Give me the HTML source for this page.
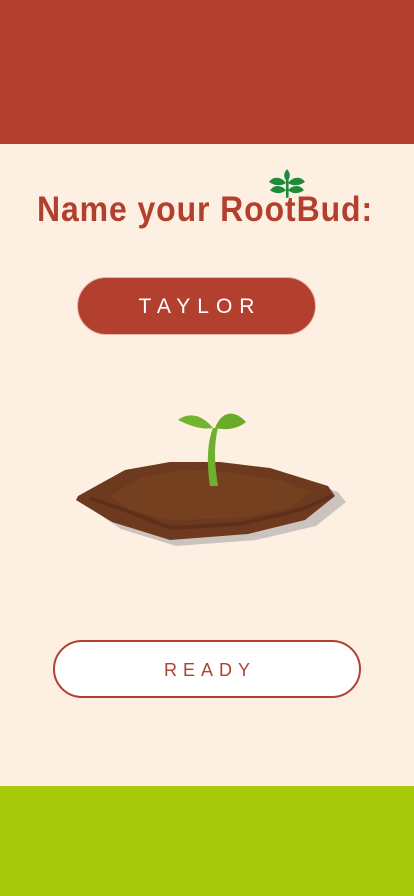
<!DOCTYPE html>
<html><head><meta charset="utf-8"><style>
*{margin:0;padding:0;box-sizing:border-box}
body{width:414px;height:896px;background:#fdefe2;position:relative;overflow:hidden;font-family:"Liberation Sans",sans-serif}
.top{position:absolute;left:0;top:0;width:414px;height:144px;background:#b3402f}
.title{position:absolute;left:-2px;width:414px;top:190px;text-align:center;color:#b3402f;font-weight:bold;font-size:35px;letter-spacing:1px;transform:scaleX(0.913)}
.name{position:absolute;left:77px;top:277px;width:239px;height:58px;border-radius:29px;background:#b3402f;border:1px solid #e8b9ae;color:#fff;font-size:21px;letter-spacing:7px;text-align:center;line-height:58px;padding-left:7px}
.ready{position:absolute;left:53px;top:640px;width:308px;height:58px;border-radius:29px;background:#fff;border:2px solid #b3402f;color:#b3402f;font-size:18px;letter-spacing:6px;text-align:center;line-height:56px;padding-left:6px}
.grass{position:absolute;left:0;top:786px;width:414px;height:110px;background:#a8c90c}
</style></head><body>
<div class="top"></div>
<div class="title">Name your RootBud:</div>
<svg style="position:absolute;left:268px;top:168px" width="38" height="30" viewBox="0 0 36 28">
<path d="M18 1 C14 5 15 10 18 12 C21 10 22 5 18 1Z" fill="#1f8a3a"/>
<path d="M17 14 C12 7 4 8 1 13 C7 17 13 17 17 14Z" fill="#1f8a3a"/>
<path d="M19 14 C24 7 32 8 35 13 C29 17 23 17 19 14Z" fill="#1f8a3a"/>
<path d="M17 21 C12 15 5 16 2 21 C8 25 13 24 17 21Z" fill="#1f8a3a"/>
<path d="M19 21 C24 15 31 16 34 21 C28 25 23 24 19 21Z" fill="#1f8a3a"/>
<rect x="17" y="8" width="2.5" height="20" fill="#1f8a3a"/>
</svg>
<div class="name">TAYLOR</div>
<svg style="position:absolute;left:70px;top:400px" width="280" height="150" viewBox="0 0 280 150">
<path d="M12 95 L60 68 L105 62 L155 62 L205 68 L262 88 L270 98 L240 122 L180 136 L100 142 L45 125 L8 100Z" fill="#9a9a9a" opacity=".5" transform="translate(6,4)"/>
<path d="M8 96 L55 70 L100 62 L150 62 L200 68 L258 86 L265 96 L235 120 L178 134 L100 140 L42 122 L6 100Z" fill="#6e3a1f"/>
<path d="M40 96 L70 78 L110 70 L160 72 L210 80 L240 92 L220 108 L170 118 L100 120 L60 110Z" fill="#74401f"/>
<path d="M20 98 L60 112 L100 128 L170 124 L230 110 L262 96" fill="none" stroke="#5e301a" stroke-width="4"/>
<path d="M140 86 C136 60 138 40 143 28 L148 28 C144 44 144 62 148 86Z" fill="#6fb02c"/>
<path d="M143 28 C132 14 118 12 108 20 C120 26 132 30 143 28Z" fill="#72b530"/>
<path d="M145 28 C152 10 165 10 176 22 C166 30 155 30 145 28Z" fill="#6aab2a"/>
</svg>
<div class="ready">READY</div>
<div class="grass"></div>
</body></html>
